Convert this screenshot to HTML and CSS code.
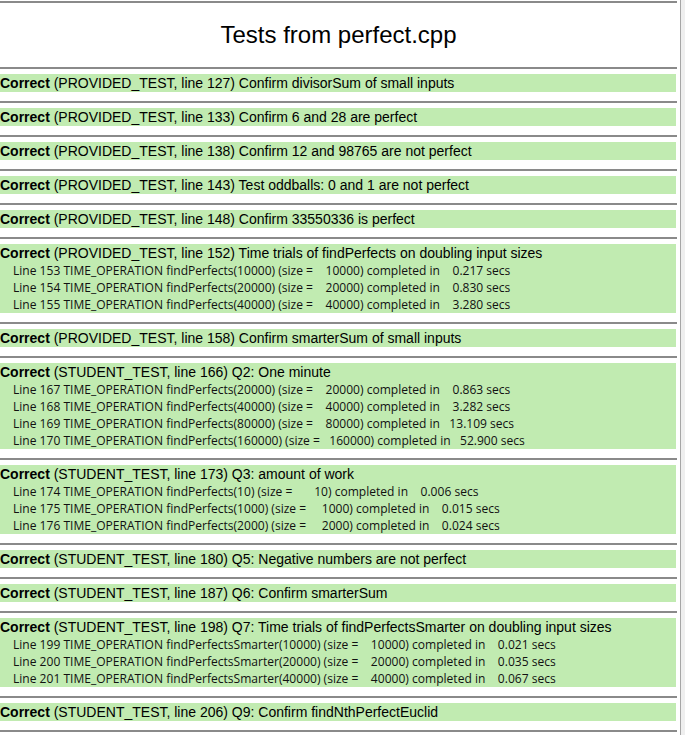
FILE: index.html
```html
<!DOCTYPE html>
<html>
<head>
<meta charset="utf-8">
<title>Tests from perfect.cpp</title>
<link rel="stylesheet" href="styles.css">
</head>
<body>
<div class="frame">
  <div class="content">
    <hr class="rule top">
    <h1 class="title">Tests from perfect.cpp</h1>
    <hr class="rule">

    <div class="result"><b>Correct</b> (PROVIDED_TEST, line 127) Confirm divisorSum of small inputs</div>
    <hr class="rule">
    <div class="result"><b>Correct</b> (PROVIDED_TEST, line 133) Confirm 6 and 28 are perfect</div>
    <hr class="rule">
    <div class="result"><b>Correct</b> (PROVIDED_TEST, line 138) Confirm 12 and 98765 are not perfect</div>
    <hr class="rule">
    <div class="result"><b>Correct</b> (PROVIDED_TEST, line 143) Test oddballs: 0 and 1 are not perfect</div>
    <hr class="rule">
    <div class="result"><b>Correct</b> (PROVIDED_TEST, line 148) Confirm 33550336 is perfect</div>
    <hr class="rule">
    <div class="result"><b>Correct</b> (PROVIDED_TEST, line 152) Time trials of findPerfects on doubling input sizes
      <div class="op">Line 153 TIME_OPERATION findPerfects(10000) (size =    10000) completed in    0.217 secs</div>
      <div class="op">Line 154 TIME_OPERATION findPerfects(20000) (size =    20000) completed in    0.830 secs</div>
      <div class="op">Line 155 TIME_OPERATION findPerfects(40000) (size =    40000) completed in    3.280 secs</div>
    </div>
    <hr class="rule">
    <div class="result"><b>Correct</b> (PROVIDED_TEST, line 158) Confirm smarterSum of small inputs</div>
    <hr class="rule">
    <div class="result"><b>Correct</b> (STUDENT_TEST, line 166) Q2: One minute
      <div class="op">Line 167 TIME_OPERATION findPerfects(20000) (size =    20000) completed in    0.863 secs</div>
      <div class="op">Line 168 TIME_OPERATION findPerfects(40000) (size =    40000) completed in    3.282 secs</div>
      <div class="op">Line 169 TIME_OPERATION findPerfects(80000) (size =    80000) completed in   13.109 secs</div>
      <div class="op">Line 170 TIME_OPERATION findPerfects(160000) (size =   160000) completed in   52.900 secs</div>
    </div>
    <hr class="rule">
    <div class="result"><b>Correct</b> (STUDENT_TEST, line 173) Q3: amount of work
      <div class="op">Line 174 TIME_OPERATION findPerfects(10) (size =       10) completed in    0.006 secs</div>
      <div class="op">Line 175 TIME_OPERATION findPerfects(1000) (size =     1000) completed in    0.015 secs</div>
      <div class="op">Line 176 TIME_OPERATION findPerfects(2000) (size =     2000) completed in    0.024 secs</div>
    </div>
    <hr class="rule">
    <div class="result"><b>Correct</b> (STUDENT_TEST, line 180) Q5: Negative numbers are not perfect</div>
    <hr class="rule">
    <div class="result"><b>Correct</b> (STUDENT_TEST, line 187) Q6: Confirm smarterSum</div>
    <hr class="rule">
    <div class="result"><b>Correct</b> (STUDENT_TEST, line 198) Q7: Time trials of findPerfectsSmarter on doubling input sizes
      <div class="op">Line 199 TIME_OPERATION findPerfectsSmarter(10000) (size =    10000) completed in    0.021 secs</div>
      <div class="op">Line 200 TIME_OPERATION findPerfectsSmarter(20000) (size =    20000) completed in    0.035 secs</div>
      <div class="op">Line 201 TIME_OPERATION findPerfectsSmarter(40000) (size =    40000) completed in    0.067 secs</div>
    </div>
    <hr class="rule">
    <div class="result"><b>Correct</b> (STUDENT_TEST, line 206) Q9: Confirm findNthPerfectEuclid</div>
    <hr class="rule">
  </div>
</div>
</body>
</html>
```

FILE: styles.css
```css
html, body {
  margin: 0;
  padding: 0;
  height: 100%;
}

body {
  background: #efefef;
  overflow: hidden;
}

.frame {
  width: 680px;
  height: 735px;
  background: #ffffff;
  border-right: 1px solid #a6a6a6;
  overflow: hidden;
}

.content {
  width: 677px;
  display: flex;
  flex-direction: column;
  font-family: "Liberation Sans", Arial, sans-serif;
  color: #000;
}

.rule {
  margin: 0;
  height: 0;
  border: none;
  border-top: 2px solid #8a8a8a;
  width: 677px;
}

.rule.top {
  margin-top: 1px;
}

.title {
  margin: 0;
  height: 64px;
  display: flex;
  align-items: center;
  justify-content: center;
  font-size: 24px;
  font-weight: normal;
  line-height: 1;
}

.result {
  width: 676px;
  margin: 5px 0 9px;
  background: #c1ebb1;
  font-size: 14px;
  line-height: 18px;
  white-space: nowrap;
}

.result b {
  font-weight: bold;
}

.op {
  font-family: "Open Sans", "Noto Sans", sans-serif;
  font-size: 12.05px;
  line-height: 17px;
  padding-left: 13px;
  white-space: pre;
  color: #111;
}
```
